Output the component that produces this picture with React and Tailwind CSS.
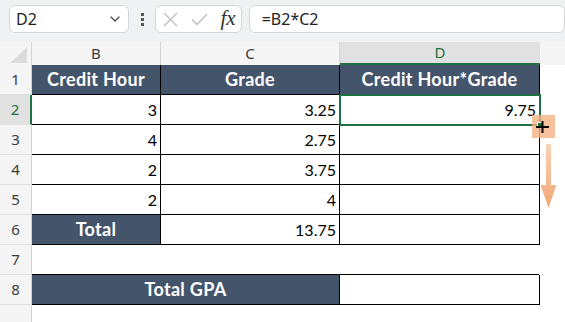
import { ChevronDown } from "lucide-react";

const rows = [
  { n: 1, cells: ["Credit Hour", "Grade", "Credit Hour*Grade"], head: true },
  { n: 2, cells: ["3", "3.25", "9.75"] },
  { n: 3, cells: ["4", "2.75", ""] },
  { n: 4, cells: ["2", "3.75", ""] },
  { n: 5, cells: ["2", "4", ""] },
];

const RowHead = ({ n, active }) => (
  <div
    className={
      "w-[32px] shrink-0 flex items-center justify-center text-[15px] font-['Noto_Sans'] border-b border-[#e1e1e1] " +
      (active
        ? "bg-[#e1e1e1] text-[#1e7145] border-r-2 border-r-[#1e7145]"
        : "bg-[#f5f5f5] text-[#3b3b3b] border-r border-r-[#d4d4d4]")
    }
  >
    {n}
  </div>
);

// dark header cell
const Head = ({ w, children }) => (
  <div
    className={
      "shrink-0 bg-[#44546a] text-white font-bold text-[18px] tracking-[0.3px] border-r border-b border-black flex items-center justify-center " +
      w
    }
  >
    {children}
  </div>
);

const App = () => {
  return (
    <div className="relative w-[565px] h-[322px] overflow-hidden bg-white font-['Lato',sans-serif]">
      {/* formula bar */}
      <div className="h-[42px] bg-[#f0f1f2] flex items-start pt-[5px] pl-[9px] font-['Noto_Sans',sans-serif]">
        <div className="w-[125px] h-[28px] bg-white border border-[#d6d6d6] rounded-md flex items-center justify-between pl-[6px] pr-[5px] text-[16px] text-[#222]">
          <span>D2</span>
          <ChevronDown size={16} strokeWidth={1.8} className="text-[#444]" />
        </div>
        <div className="w-[27px] h-[28px] flex flex-col items-center justify-center gap-[2px]">
          <span className="w-[3px] h-[3px] bg-[#555]" />
          <span className="w-[3px] h-[3px] bg-[#555]" />
          <span className="w-[3px] h-[3px] bg-[#555]" />
        </div>
        <div className="w-[90px] h-[28px] bg-white border border-[#d6d6d6] rounded-md flex items-center pl-[7px] pr-[5px] justify-between">
          <svg width="15" height="15" viewBox="0 0 15 15">
            <path d="M1 1L14 14M14 1L1 14" stroke="#bdbdbd" strokeWidth="1.3" fill="none" />
          </svg>
          <svg width="17" height="13" viewBox="0 0 17 13">
            <path d="M1 6.5L6 11.5L16 1" stroke="#bdbdbd" strokeWidth="1.3" fill="none" />
          </svg>
          <span className="font-['Liberation_Serif',serif] italic text-[21px] text-[#333] leading-none pb-[2px]">
            fx
          </span>
        </div>
        <div className="ml-[7px] w-[330px] h-[28px] bg-white border border-[#d6d6d6] rounded-md flex items-center pl-[12px] text-[16px] text-[#222]">
          =B2*C2
        </div>
      </div>

      {/* column headers */}
      <div className="flex h-[23px] bg-[#f5f5f5] font-['Noto_Sans',sans-serif] text-[15px] text-[#3b3b3b]">
        <div className="w-[32px] shrink-0 border-r border-[#d4d4d4] flex items-end justify-end pr-[4px] pb-[2px]">
          <svg width="17" height="16" viewBox="0 0 17 16">
            <path d="M17 0V16H0Z" fill="#dcdcdc" />
          </svg>
        </div>
        <div className="w-[129px] shrink-0 border-r border-[#d4d4d4] flex items-center justify-center">B</div>
        <div className="w-[179px] shrink-0 border-r border-[#d4d4d4] flex items-center justify-center">C</div>
        <div className="w-[200px] shrink-0 bg-[#e1e1e1] border-b-2 border-[#1e7145] text-[#1e7145] flex items-center justify-center">
          D
        </div>
        <div className="flex-1" />
      </div>

      {rows.map((r) => (
        <div key={r.n} className="flex h-[30px]">
          <RowHead n={r.n} active={r.n === 2} />
          {r.head ? (
            <>
              <Head w="w-[129px]">{r.cells[0]}</Head>
              <Head w="w-[179px]">{r.cells[1]}</Head>
              <Head w="w-[200px]">{r.cells[2]}</Head>
            </>
          ) : (
            r.cells.map((c, i) => (
              <div
                key={i}
                className={
                  "shrink-0 border-r border-b border-black flex items-center justify-end pr-[3px] text-[16px] text-black " +
                  (i === 0 ? "w-[129px]" : i === 1 ? "w-[179px]" : "w-[200px]")
                }
              >
                {c}
              </div>
            ))
          )}
        </div>
      ))}

      {/* row 6 */}
      <div className="flex h-[30px]">
        <RowHead n={6} />
        <Head w="w-[129px]">Total</Head>
        <div className="w-[179px] shrink-0 border-r border-b border-black flex items-center justify-end pr-[3px] text-[16px]">
          13.75
        </div>
        <div className="w-[200px] shrink-0 border-r border-b border-black" />
      </div>

      {/* row 7 */}
      <div className="flex h-[30px]">
        <RowHead n={7} />
        <div className="w-[507px] shrink-0 border-b border-black" />
      </div>

      {/* row 8 */}
      <div className="flex h-[30px]">
        <RowHead n={8} />
        <Head w="w-[308px]">Total GPA</Head>
        <div className="w-[200px] shrink-0 border-r border-b border-black" />
      </div>

      {/* row 9 */}
      <div className="flex h-[30px]">
        <RowHead n="" />
      </div>

      {/* selection + fill handle drag */}
      <div className="absolute left-[339px] top-[94px] w-[202px] h-[32px] border-2 border-[#1e7145]" />
      <div className="absolute left-[532px] top-[115px] w-[23px] h-[23px] bg-[#f4b183] opacity-80" />
      <div className="absolute left-[537px] top-[122px] w-[6px] h-[6px] bg-[#1e7145] border border-white" />
      <svg className="absolute left-[536px] top-[121px]" width="13" height="12" viewBox="0 0 13 12">
        <path d="M0 6H13M6.5 0V12" stroke="black" strokeWidth="2" />
      </svg>
      <svg className="absolute left-[540px] top-[144px]" width="17" height="65" viewBox="0 0 17 65">
        <defs>
          <linearGradient id="ag" x1="0" y1="0" x2="0" y2="1">
            <stop offset="0" stopColor="#f8d3b8" />
            <stop offset="1" stopColor="#f3a774" />
          </linearGradient>
        </defs>
        <path d="M6 0H11V41H16.5L8.5 64L0.5 41H6Z" fill="url(#ag)" />
      </svg>
    </div>
  );
};

export default App;
